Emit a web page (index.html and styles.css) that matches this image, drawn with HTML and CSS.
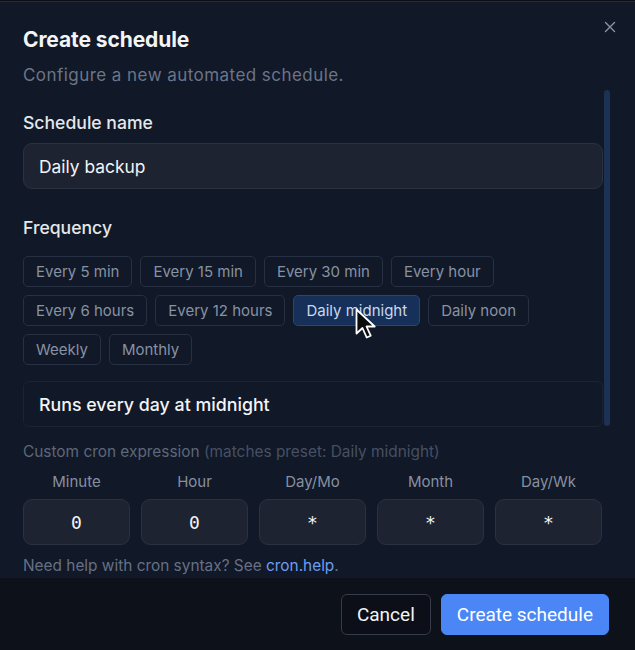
FILE: index.html
```html
<!DOCTYPE html>
<html lang="en">
<head>
<meta charset="utf-8">
<title>Create schedule</title>
<link rel="stylesheet" href="styles.css">
</head>
<body>
<div class="dialog">
  <button class="close" aria-label="Close">
    <svg width="12" height="12" viewBox="0 0 12 12"><path d="M1.5 1.5l9 9M10.5 1.5l-9 9" stroke="currentColor" stroke-width="1.4" stroke-linecap="round"/></svg>
  </button>
  <div class="body">
    <h2 class="title">Create schedule</h2>
    <p class="subtitle">Configure a new automated schedule.</p>

    <div class="scroll-wrap">
      <div class="scroll">
        <label class="label">Schedule name</label>
        <div class="input">Daily backup</div>

        <label class="label freq-label">Frequency</label>
        <div class="chips">
          <span class="chip">Every 5 min</span>
          <span class="chip">Every 15 min</span>
          <span class="chip">Every 30 min</span>
          <span class="chip">Every hour</span>
          <span class="chip">Every 6 hours</span>
          <span class="chip">Every 12 hours</span>
          <span class="chip chip-active">Daily midnight
            <svg class="pointer" width="22" height="32" viewBox="0 0 22 32"><path d="M1.5 1.5v24l6-5.5 4.2 9.5 4-1.8-4.2-9.2h8.2z" fill="#0b0b0b" stroke="#fff" stroke-width="1.8" stroke-linejoin="round"/></svg>
          </span>
          <span class="chip">Daily noon</span>
          <span class="chip">Weekly</span>
          <span class="chip">Monthly</span>
        </div>

        <div class="summary">Runs every day at midnight</div>
      </div>
      <div class="scrollbar"><div class="thumb"></div></div>
    </div>

    <p class="cron-title">Custom cron expression <span class="cron-note">(matches preset: Daily midnight)</span></p>
    <div class="cron-grid">
      <div class="cron-col"><span class="cron-label">Minute</span><div class="cron-field">0</div></div>
      <div class="cron-col"><span class="cron-label">Hour</span><div class="cron-field">0</div></div>
      <div class="cron-col"><span class="cron-label">Day/Mo</span><div class="cron-field">*</div></div>
      <div class="cron-col"><span class="cron-label">Month</span><div class="cron-field">*</div></div>
      <div class="cron-col"><span class="cron-label">Day/Wk</span><div class="cron-field">*</div></div>
    </div>
    <p class="help">Need help with cron syntax? See <a href="#" class="link">cron.help</a>.</p>
  </div>

  <div class="footer">
    <button class="btn btn-cancel">Cancel</button>
    <button class="btn btn-primary">Create schedule</button>
  </div>
</div>
</body>
</html>
```

FILE: styles.css
```css
* { box-sizing: border-box; }

html, body {
  margin: 0;
  padding: 0;
  background: #0b0e15;
}

body {
  font-family: Inter, "Noto Sans", sans-serif;
  color: #e5e7eb;
}

.dialog {
  position: relative;
  width: 635px;
  height: 650px;
  margin-top: 1px;
  background: #111827;
  border-top: 1px solid #252c3a;
  display: flex;
  flex-direction: column;
}

.close {
  position: absolute;
  top: 18px;
  right: 18px;
  width: 14px;
  height: 14px;
  padding: 0;
  border: 0;
  background: none;
  color: #8b93a3;
  display: flex;
  align-items: center;
  justify-content: center;
}

.body {
  flex: 1;
  padding: 24px 24px 0 23px;
  display: flex;
  flex-direction: column;
}

.title {
  margin: 0;
  font-size: 21px;
  line-height: 28px;
  font-weight: 700;
  letter-spacing: -0.1px;
  color: #f3f4f6;
}

.subtitle {
  margin: 9px 0 0;
  font-size: 17px;
  line-height: 24px;
  letter-spacing: 0.45px;
  color: #6b7588;
}

/* scrolling form area with its slim track on the right */
.scroll-wrap {
  margin-top: 3px;
  height: 340px;
  display: flex;
}

.scroll {
  flex: 1;
  min-width: 0;
  overflow: hidden;
  padding: 21px 0 0 0;
}

.scrollbar {
  width: 8px;
  flex: none;
  padding: 0 1px 4px 1px;
}

.thumb {
  height: 100%;
  background: #1b3252;
  border-radius: 4px;
}

.label {
  display: block;
  font-size: 17.6px;
  line-height: 24px;
  font-weight: 500;
  color: #e5e7eb;
}

.input {
  margin-top: 8px;
  height: 46px;
  padding: 0 15px;
  display: flex;
  align-items: center;
  background: #1e2332;
  border: 1px solid #2b3140;
  border-radius: 9px;
  font-size: 17.4px;
  color: #f3f4f6;
}

.freq-label { margin-top: 27px; }

.chips {
  margin-top: 16px;
  display: flex;
  flex-wrap: wrap;
  column-gap: 8px;
  row-gap: 8px;
  padding-right: 60px;
}

.chip {
  position: relative;
  height: 31px;
  padding: 0 12px;
  display: inline-flex;
  align-items: center;
  border: 1px solid #283143;
  border-radius: 5px;
  font-size: 15px;
  color: #8792a4;
  background: #111827;
}

.chip-active {
  background: #16305a;
  border-color: #25467a;
  color: #cbd7ec;
}

.pointer {
  position: absolute;
  left: 61px;
  top: 12px;
}

.summary {
  margin-top: 16px;
  height: 46px;
  padding: 0 15px;
  display: flex;
  align-items: center;
  border: 1px solid #1c2434;
  border-radius: 6px;
  font-size: 17.8px;
  font-weight: 500;
  color: #f3f4f6;
}

.cron-title {
  margin: 12px 0 0;
  font-size: 15.4px;
  line-height: 20px;
  color: #5e6778;
}

.cron-note { color: #465063; }

.cron-grid {
  margin-top: 10px;
  margin-right: 9px;
  display: grid;
  grid-template-columns: repeat(5, 1fr);
  gap: 11px;
}

.cron-col {
  display: flex;
  flex-direction: column;
  align-items: stretch;
  gap: 7px;
}

.cron-label {
  text-align: center;
  font-size: 15px;
  line-height: 20px;
  color: #8690a1;
}

.cron-field {
  height: 46px;
  display: flex;
  align-items: center;
  justify-content: center;
  background: #1e2332;
  border: 1px solid #2b3140;
  border-radius: 9px;
  font-family: "DejaVu Sans Mono", monospace;
  font-size: 18px;
  color: #f3f4f6;
}

.help {
  margin: 11px 0 0;
  font-size: 15.4px;
  line-height: 20px;
  color: #667085;
}

.link {
  color: #6c9ff0;
  text-decoration: none;
}

.footer {
  height: 72px;
  flex: none;
  margin-bottom: 1px;
  background: #0d111a;
  display: flex;
  justify-content: flex-end;
  align-items: flex-start;
  gap: 10px;
  padding: 16px 26px 0 0;
}

.btn {
  height: 41px;
  border-radius: 6px;
  font-family: Roboto, "Liberation Sans", sans-serif;
  font-size: 19px;
  padding: 0 15px;
}

.btn-cancel {
  background: #0c0f17;
  border: 1px solid #353b48;
  color: #f3f4f6;
}

.btn-primary {
  background: #4b86f6;
  border: 1px solid #4b86f6;
  color: #ffffff;
}
```
